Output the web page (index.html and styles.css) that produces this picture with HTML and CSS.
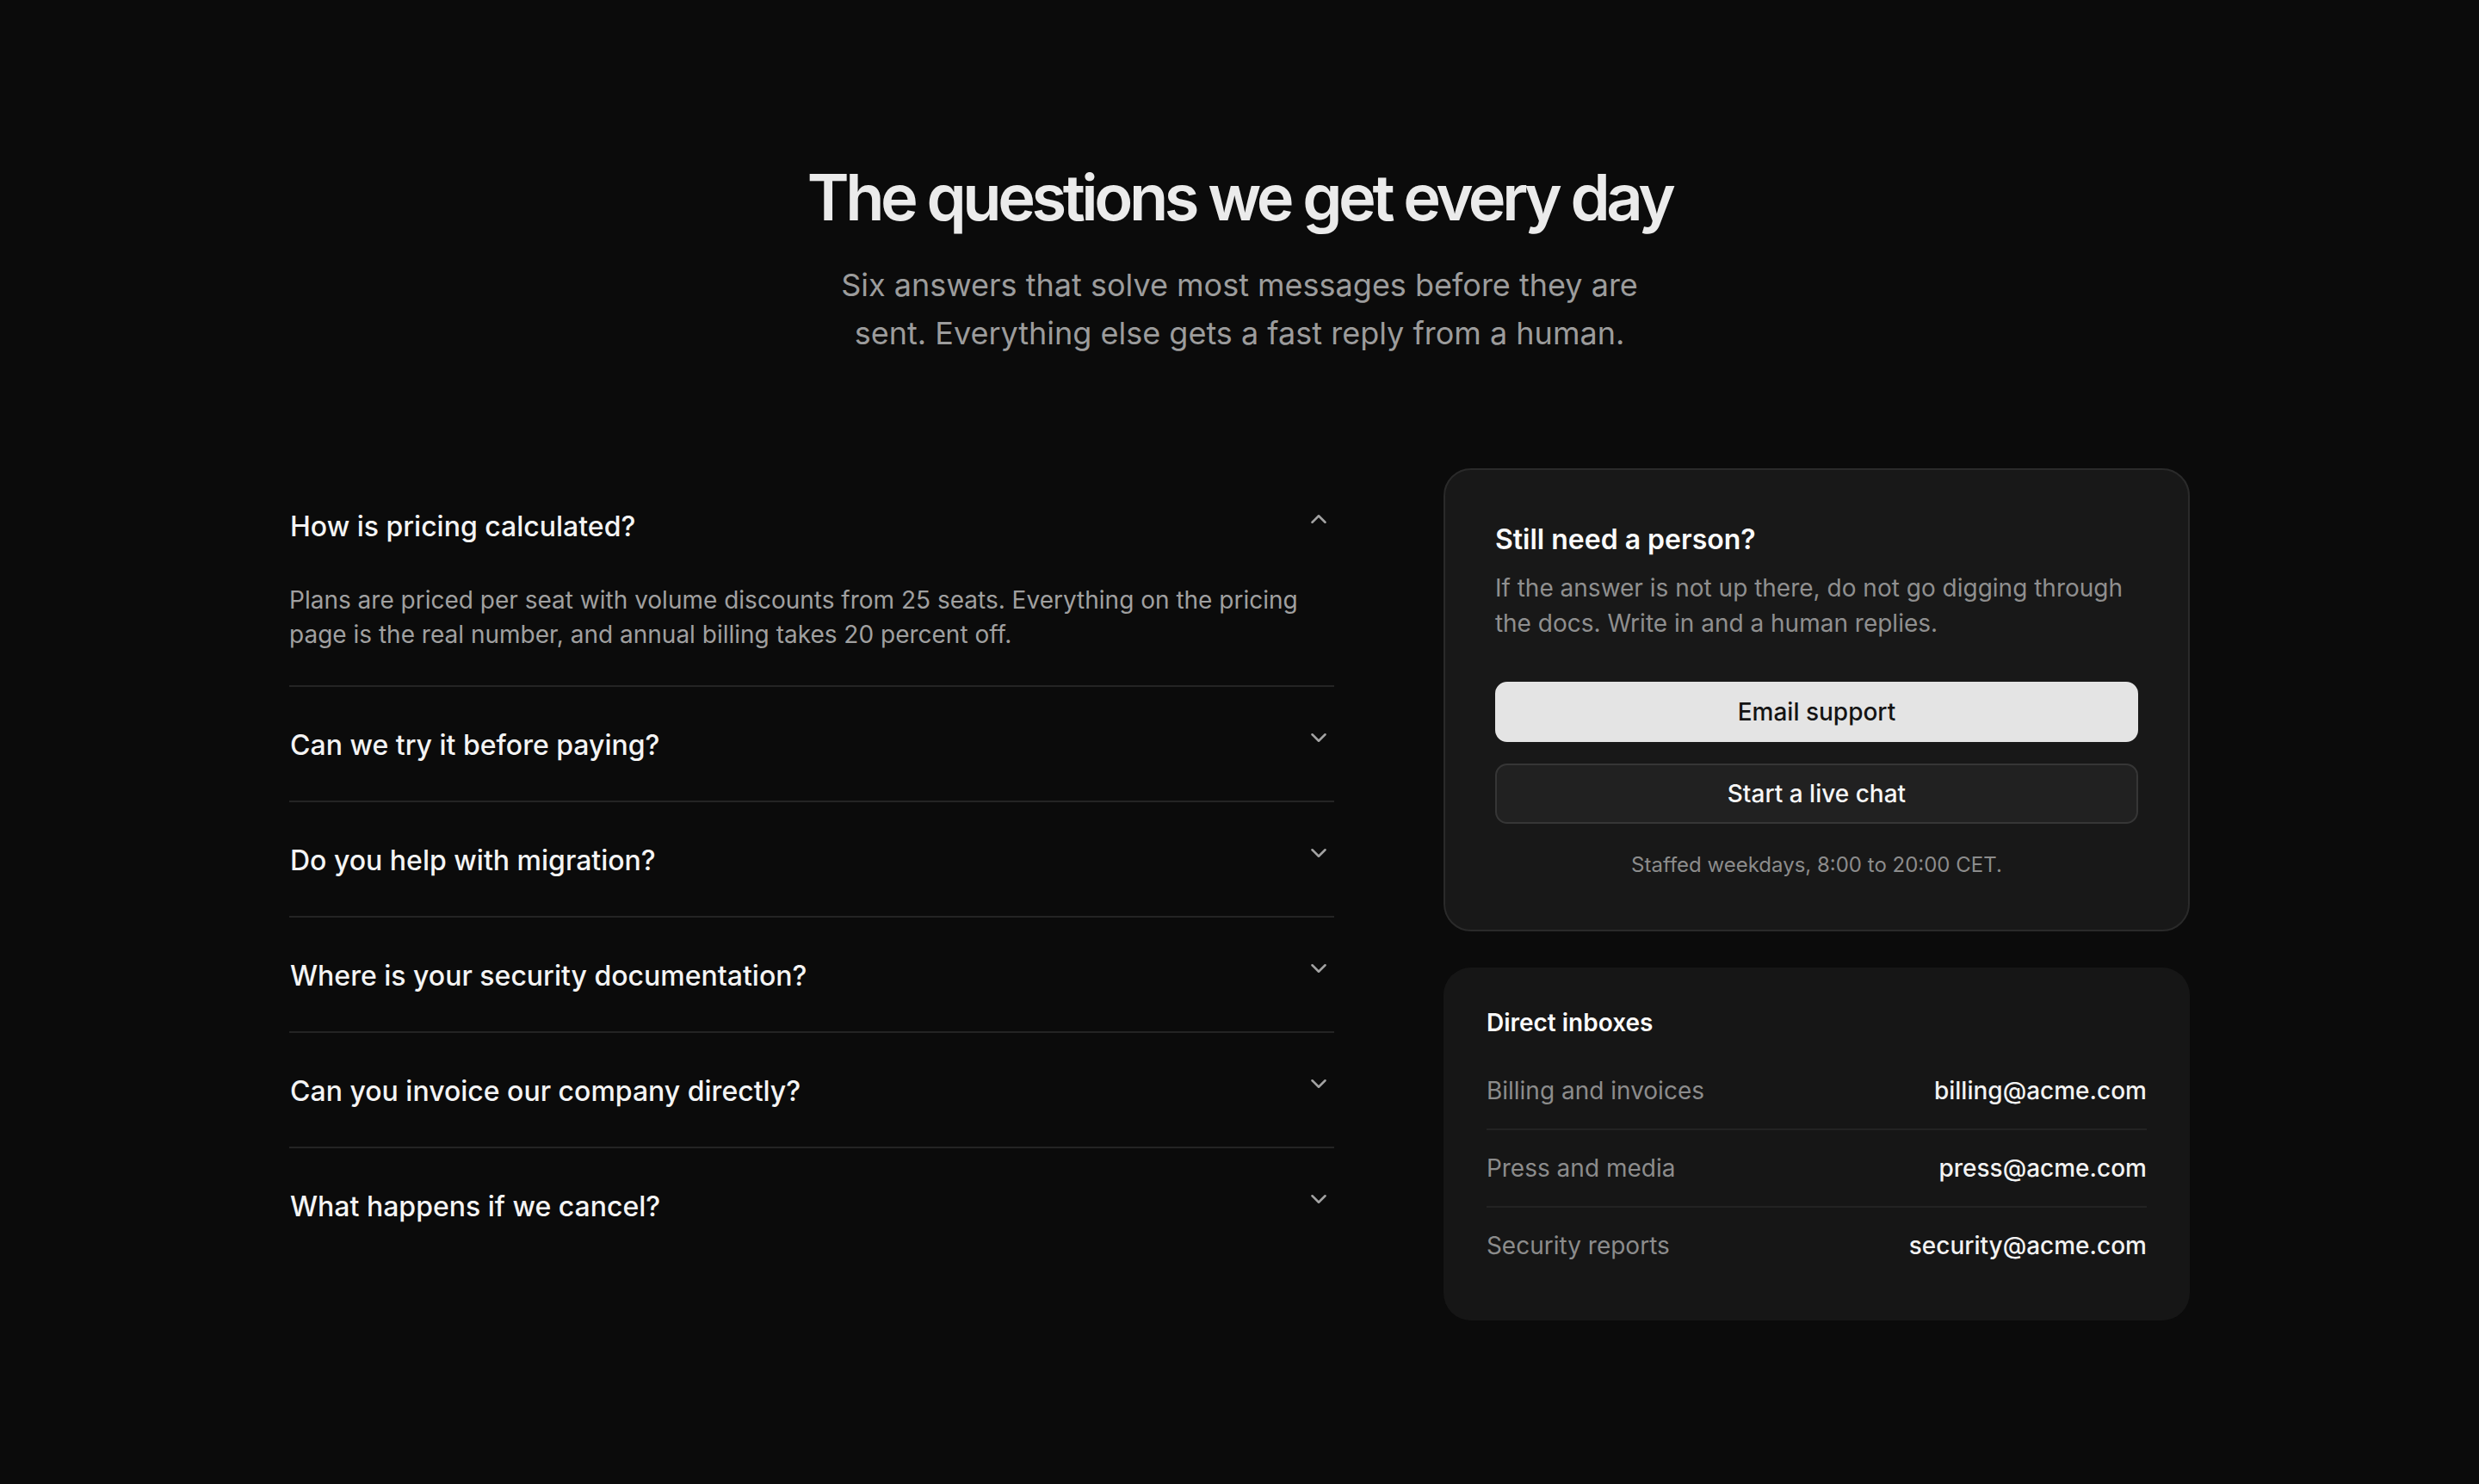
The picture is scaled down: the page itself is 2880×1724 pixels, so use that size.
FILE: index.html
```html
<!DOCTYPE html>
<html lang="en">

<head>
    <meta charset="UTF-8">
    <title>Help Center</title>
    <link rel="stylesheet" href="styles.css">
</head>

<body>

    <section class="help">
        <header class="intro">
            <h1>The questions we get every day</h1>
            <p>Six answers that solve most messages before they are sent. Everything else gets a fast reply from a human.</p>
        </header>

        <div class="layout">
            <div class="faq-list">
                <div class="faq-item open">
                    <button class="faq-question">
                        <span>How is pricing calculated?</span>
                        <svg class="chevron" viewBox="0 0 24 24"><path d="m18 15-6-6-6 6"/></svg>
                    </button>
                    <p class="faq-answer">Plans are priced per seat with volume discounts from 25 seats. Everything on the pricing page is the real number, and annual billing takes 20 percent off.</p>
                </div>
                <div class="faq-item">
                    <button class="faq-question">
                        <span>Can we try it before paying?</span>
                        <svg class="chevron" viewBox="0 0 24 24"><path d="m6 9 6 6 6-6"/></svg>
                    </button>
                </div>
                <div class="faq-item">
                    <button class="faq-question">
                        <span>Do you help with migration?</span>
                        <svg class="chevron" viewBox="0 0 24 24"><path d="m6 9 6 6 6-6"/></svg>
                    </button>
                </div>
                <div class="faq-item">
                    <button class="faq-question">
                        <span>Where is your security documentation?</span>
                        <svg class="chevron" viewBox="0 0 24 24"><path d="m6 9 6 6 6-6"/></svg>
                    </button>
                </div>
                <div class="faq-item">
                    <button class="faq-question">
                        <span>Can you invoice our company directly?</span>
                        <svg class="chevron" viewBox="0 0 24 24"><path d="m6 9 6 6 6-6"/></svg>
                    </button>
                </div>
                <div class="faq-item">
                    <button class="faq-question">
                        <span>What happens if we cancel?</span>
                        <svg class="chevron" viewBox="0 0 24 24"><path d="m6 9 6 6 6-6"/></svg>
                    </button>
                </div>
            </div>

            <aside class="side">
                <div class="card contact">
                    <h3>Still need a person?</h3>
                    <p class="contact-text">If the answer is not up there, do not go digging through the docs. Write in and a human replies.</p>
                    <div class="actions">
                        <button class="btn btn-primary">Email support</button>
                        <button class="btn btn-ghost">Start a live chat</button>
                    </div>
                    <p class="hours">Staffed weekdays, 8:00 to 20:00 CET.</p>
                </div>

                <div class="card inboxes">
                    <h4>Direct inboxes</h4>
                    <ul class="inbox-list">
                        <li><span class="label">Billing and invoices</span><span class="address">billing@acme.com</span></li>
                        <li><span class="label">Press and media</span><span class="address">press@acme.com</span></li>
                        <li><span class="label">Security reports</span><span class="address">security@acme.com</span></li>
                    </ul>
                </div>
            </aside>
        </div>
    </section>

    <script>
        // toggle answers open and closed
        document.querySelectorAll(".faq-question").forEach(btn => {
            btn.addEventListener("click", () => {
                btn.parentElement.classList.toggle("open");
            });
        });
    </script>

</body>

</html>
```

FILE: styles.css
```css
* {
    box-sizing: border-box;
}

body {
    margin: 0;
    background: #0b0b0b;
    color: #f2f2f2;
    font-family: Inter, "Noto Sans", sans-serif;
}

button {
    font-family: inherit;
    cursor: pointer;
}

.help {
    max-width: 2208px;
    margin: 0 auto;
    padding: 188px 0 160px;
}

/* heading block */
.intro {
    text-align: center;
}

.intro h1 {
    margin: 0;
    font-size: 74px;
    line-height: 82px;
    font-weight: 600;
    letter-spacing: -0.06em;
    color: #ebebeb;
}

.intro p {
    max-width: 980px;
    margin: 33px auto 0;
    font-size: 36px;
    line-height: 56px;
    color: #9c9c9c;
}

.layout {
    display: grid;
    grid-template-columns: 1.4fr 1fr;
    gap: 127px;
    margin-top: 129px;
    align-items: start;
}

/* questions */
.faq-item {
    border-bottom: 2px solid #242424;
}

.faq-item:last-child {
    border-bottom: none;
}

.faq-question {
    display: flex;
    width: 100%;
    justify-content: space-between;
    align-items: flex-start;
    gap: 24px;
    padding: 44px 3px 40px 1px;
    background: none;
    border: none;
    text-align: left;
    color: #f4f4f4;
    font-size: 32px;
    line-height: 48px;
    font-weight: 500;
}

.chevron {
    width: 30px;
    height: 30px;
    flex-shrink: 0;
    fill: none;
    stroke: #a3a3a3;
    stroke-width: 2;
    stroke-linecap: round;
    stroke-linejoin: round;
}

.faq-answer {
    display: none;
    margin: 0;
    padding: 1px 40px 39px 0;
    font-size: 28px;
    line-height: 40px;
    color: #a0a0a0;
}

.faq-item.open .faq-answer {
    display: block;
}

/* side cards */
.side {
    display: flex;
    flex-direction: column;
    gap: 42px;
}

.card {
    border-radius: 32px;
}

.contact {
    background: #181818;
    border: 2px solid #2a2a2a;
    padding: 58px;
}

.contact h3 {
    margin: 0;
    font-size: 32px;
    line-height: 46px;
    font-weight: 600;
    color: #fafafa;
}

.contact-text {
    margin: 13px 0 0;
    font-size: 28px;
    line-height: 41px;
    color: #8f8f8f;
}

.actions {
    display: flex;
    flex-direction: column;
    gap: 25px;
    margin-top: 47px;
}

.btn {
    padding: 13px 20px;
    border-radius: 14px;
    font-size: 28px;
    line-height: 40px;
    font-weight: 500;
}

.btn-primary {
    background: #e4e4e4;
    border: 2px solid #e4e4e4;
    color: #141414;
}

.btn-ghost {
    background: #212121;
    border: 2px solid #363636;
    color: #f6f6f6;
}

.hours {
    margin: 30px 0 0;
    text-align: center;
    font-size: 24px;
    line-height: 35px;
    color: #8c8c8c;
}

.inboxes {
    background: #161616;
    padding: 43px 50px;
}

.inboxes h4 {
    margin: 0 0 13px;
    font-size: 28px;
    line-height: 43px;
    font-weight: 600;
    color: #fafafa;
}

.inbox-list {
    list-style-type: none;
    margin: 0;
    padding: 0;
}

.inbox-list li {
    display: flex;
    justify-content: space-between;
    padding: 24px 0;
    border-bottom: 2px solid #232323;
    font-size: 28px;
    line-height: 40px;
}

.inbox-list li:last-child {
    border-bottom: none;
}

.label {
    color: #8c8c8c;
}

.address {
    color: #f2f2f2;
    font-weight: 500;
}
```
